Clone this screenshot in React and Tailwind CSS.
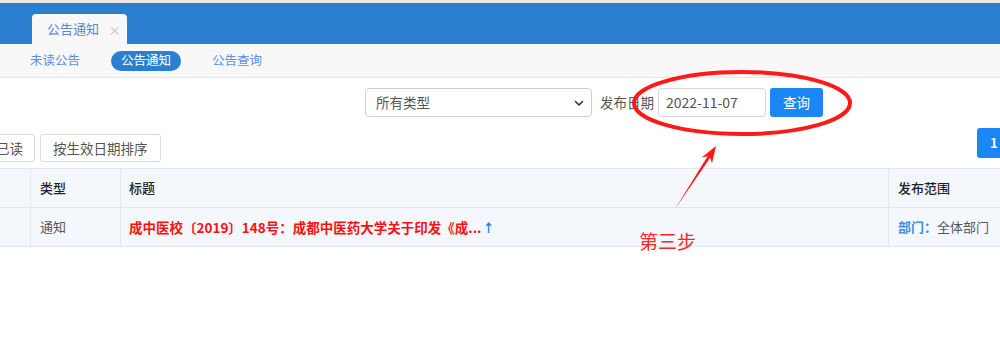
export default function App() {
  return (
    <div className="relative w-[1000px] h-[339px] overflow-hidden bg-white font-['Noto_Sans_CJK_SC',sans-serif]">
      {/* top strip */}
      <div className="h-[3px] bg-[#e9e9e9]" />
      {/* blue header with tab */}
      <div className="h-[41px] bg-[#2b7fd0] flex items-end pl-[32px]">
        <div className="w-[95px] h-[30px] bg-[#f8f8f8] rounded-t-[4px] flex items-center pl-[15px] text-[13px] text-[#5b88d3]">
          <span>公告通知</span>
          <span className="ml-[9px] text-[#c4c4c4] text-[13px] leading-none">×</span>
        </div>
      </div>
      {/* sub nav */}
      <div className="h-[34px] bg-[#f8f8f8] border-b border-[#e6e6e6] flex items-center pl-[30px] text-[12.5px] text-[#5b8fe8]">
        <span>未读公告</span>
        <span className="ml-[31px] h-[20px] px-[10px] rounded-full bg-[#2b7fd0] text-white flex items-center">公告通知</span>
        <span className="ml-[31px]">公告查询</span>
      </div>
      {/* filter row */}
      <div className="mt-[10px] flex items-center h-[29px] text-[13.5px] text-[#555]">
        <div className="ml-[365px] w-[227px] h-[29px] border border-[#cfcfcf] rounded-[4px] flex items-center justify-between pl-[10px] pr-[6px]">
          <span>所有类型</span>
          <svg width="12" height="12" viewBox="0 0 12 12" className="text-[#333]">
            <path d="M2.5 4.5 L6 8 L9.5 4.5" fill="none" stroke="currentColor" strokeWidth="1.6" strokeLinecap="round" strokeLinejoin="round" />
          </svg>
        </div>
        <span className="ml-[8px]">发布日期</span>
        <div className="ml-[4px] w-[108px] h-[29px] border border-[#d6d6d6] rounded-[4px] flex items-center pl-[7px] text-[14px]">2022-11-07</div>
        <button className="ml-[4px] w-[53px] h-[29px] rounded-[3px] bg-[#1a87f5] text-white text-[13.5px] flex items-center justify-center">查询</button>
      </div>
      {/* buttons row */}
      <div className="mt-[11px] flex items-start h-[34px]">
        <div className="mt-[6px] flex items-center">
          <button className="ml-[-43px] h-[28px] px-[11px] border border-[#dcdcdc] rounded-[3px] bg-white text-[13.5px] text-[#555] flex items-center">设为已读</button>
          <button className="ml-[5px] h-[28px] px-[12px] border border-[#dcdcdc] rounded-[3px] bg-white text-[13.5px] text-[#555] flex items-center">按生效日期排序</button>
        </div>
        <button className="ml-auto mr-[-10px] w-[33px] h-[30px] rounded-[3px] bg-[#1a87f5] text-white text-[13px] font-bold flex items-center pl-[13px]">1</button>
      </div>
      {/* table */}
      <table className="mt-[6px] ml-[-60px] w-[1148px] border-collapse table-fixed text-[13px]">
        <colgroup>
          <col className="w-[90px]" />
          <col className="w-[90px]" />
          <col className="w-[768px]" />
          <col className="w-[200px]" />
        </colgroup>
        <thead>
          <tr className="h-[39px] bg-[#f4f8fd] text-[#222] font-medium">
            <th className="border border-[#e3e7eb] text-left font-medium pl-[9px]"></th>
            <th className="border border-[#e3e7eb] text-left font-medium pl-[9px]">类型</th>
            <th className="border border-[#e3e7eb] text-left font-medium pl-[8px]">标题</th>
            <th className="border border-[#e3e7eb] text-left font-medium pl-[9px]">发布范围</th>
          </tr>
        </thead>
        <tbody>
          <tr className="h-[39px] bg-[#f4f8fd]">
            <td className="border border-[#e3e7eb]"></td>
            <td className="border border-[#e3e7eb] pl-[9px] text-[#555]">通知</td>
            <td className="border border-[#e3e7eb] pl-[8px]">
              <span className="text-[#ff1010] font-bold text-[13.5px]">成中医校〔2019〕148号：成都中医药大学关于印发《成...</span>
              <span className="text-[#1a7fd8] text-[12px] font-bold ml-[1px]">↑</span>
            </td>
            <td className="border border-[#e3e7eb] pl-[9px]">
              <span className="text-[#3c8fe8] font-bold">部门：</span>
              <span className="text-[#555]">全体部门</span>
            </td>
          </tr>
        </tbody>
      </table>
      {/* annotations */}
      <svg className="absolute left-0 top-0 pointer-events-none" width="1000" height="339" viewBox="0 0 1000 339">
        <ellipse cx="742" cy="103" rx="108" ry="31" fill="none" stroke="#ff1a1a" strokeWidth="4" />
        <polygon points="675,209 710.2,157.8 712,163.6 716,146 701.6,157.6 707.6,156.2" fill="#ff1a1a" />
      </svg>
      <div className="absolute left-[639px] top-[231px] text-[19px] text-[#ff2525] leading-none">第三步</div>
    </div>
  );
}
